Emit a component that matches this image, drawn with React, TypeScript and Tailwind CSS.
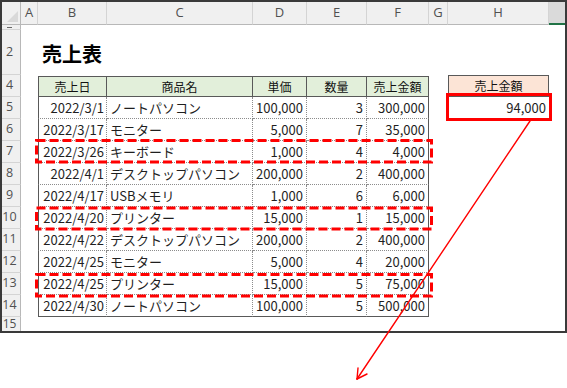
import React from "react";

const rows: string[][] = [
  ["2022/3/1", "ノートパソコン", "100,000", "3", "300,000"],
  ["2022/3/17", "モニター", "5,000", "7", "35,000"],
  ["2022/3/26", "キーボード", "1,000", "4", "4,000"],
  ["2022/4/1", "デスクトップパソコン", "200,000", "2", "400,000"],
  ["2022/4/17", "USBメモリ", "1,000", "6", "6,000"],
  ["2022/4/20", "プリンター", "15,000", "1", "15,000"],
  ["2022/4/22", "デスクトップパソコン", "200,000", "2", "400,000"],
  ["2022/4/25", "モニター", "5,000", "4", "20,000"],
  ["2022/4/25", "プリンター", "15,000", "5", "75,000"],
  ["2022/4/30", "ノートパソコン", "100,000", "5", "500,000"],
];

const colHdr =
  "bg-[#f0f0f0] [border-right:1px_solid_#d4d4d4] [border-bottom:1px_solid_#b8b8b8] flex items-center justify-center text-[13px] text-[#505050] font-['Open_Sans',sans-serif]";
const rowHdr =
  "bg-[#f0f0f0] [border-right:1px_solid_#b8b8b8] [border-bottom:1px_solid_#d4d4d4] flex items-center justify-center pr-[3px] text-[12.5px] text-[#505050] font-['Open_Sans',sans-serif] overflow-hidden";

const thBase =
  "bg-[#E2EFDA] [border-top:1px_solid_#595959] [border-bottom:1px_solid_#595959] [border-right:1px_solid_#595959] flex items-center justify-center text-[12px] text-[#111] mt-[1px]";

function App() {
  return (
    <div className="relative w-[567px] h-[388px] bg-white font-['Noto_Sans_CJK_JP',sans-serif] text-[#1f1f1f]">
      <div className="w-[567px] h-[333px] border-2 border-[#3a3a3a] overflow-hidden">
        <div className="grid grid-cols-[19px_17px_69px_146px_54px_60px_62px_19px_101px_16px] grid-rows-[23px_5px_45px_22px_repeat(10,22px)_14px]">
          {/* Column header row */}
          <div className="bg-[#f0f0f0] [border-right:1px_solid_#b8b8b8] [border-bottom:1px_solid_#b8b8b8] relative">
            <svg className="absolute right-[2px] bottom-[2px]" width="11" height="11" viewBox="0 0 11 11">
              <polygon points="11,0 11,11 0,11" fill="#d9d9d9" />
            </svg>
          </div>
          <div className={colHdr}>A</div>
          <div className={colHdr}>B</div>
          <div className={colHdr}>C</div>
          <div className={colHdr}>D</div>
          <div className={colHdr}>E</div>
          <div className={colHdr}>F</div>
          <div className={colHdr}>G</div>
          <div className={colHdr}>H</div>
          <div className="bg-[#dadada] [border-bottom:2px_solid_#217346]"></div>

          {/* Row 1 sliver */}
          <div className="bg-[#f0f0f0] [border-right:1px_solid_#b8b8b8] [border-bottom:1px_solid_#d4d4d4] flex items-end justify-center pr-[3px] pb-[1px]">
            <div className="w-[5px] h-[1px] bg-[#666]"></div>
          </div>
          <div className="col-span-9"></div>

          {/* Row 2 title */}
          <div className={rowHdr}>2</div>
          <div></div>
          <div className="flex items-center pl-[4px] pt-[2px] whitespace-nowrap overflow-visible text-[20px] font-bold text-black">
            売上表
          </div>
          <div className="col-span-7"></div>

          {/* Row 4 header */}
          <div className={rowHdr}>4</div>
          <div></div>
          <div className={thBase + " [border-left:1px_solid_#595959]"}>売上日</div>
          <div className={thBase}>商品名</div>
          <div className={thBase}>単価</div>
          <div className={thBase}>数量</div>
          <div className={thBase}>売上金額</div>
          <div></div>
          <div className="bg-[#FCE4D6] [border:1px_solid_#595959] flex items-center justify-center text-[12px] text-[#111]">
            売上金額
          </div>
          <div></div>

          {rows.map((r, i) => {
            const last = i === rows.length - 1;
            const hb = last
              ? "[border-bottom:1px_solid_#595959]"
              : "[border-bottom:1px_dotted_#8c8c8c]";
            return (
              <React.Fragment key={i}>
                <div className={rowHdr}>{i + 5}</div>
                <div></div>
                <div
                  className={
                    "[border-left:1px_solid_#595959] [border-right:1px_dotted_#8c8c8c] flex items-center justify-end pr-[2px] text-[13px] whitespace-nowrap " +
                    hb
                  }
                >
                  {r[0]}
                </div>
                <div
                  className={
                    "[border-right:1px_dotted_#8c8c8c] flex items-center pl-[3px] text-[13px] whitespace-nowrap " +
                    hb
                  }
                >
                  {r[1]}
                </div>
                <div
                  className={
                    "[border-right:1px_dotted_#8c8c8c] flex items-center justify-end pr-[3px] text-[13px] " +
                    hb
                  }
                >
                  {r[2]}
                </div>
                <div
                  className={
                    "[border-right:1px_dotted_#8c8c8c] flex items-center justify-end pr-[3px] text-[13px] " +
                    hb
                  }
                >
                  {r[3]}
                </div>
                <div
                  className={
                    "[border-right:1px_solid_#595959] flex items-center justify-end pr-[3px] text-[13px] " +
                    hb
                  }
                >
                  {r[4]}
                </div>
                <div></div>
                {i === 0 ? (
                  <div className="flex items-center justify-end pr-[3px] text-[13px]">94,000</div>
                ) : (
                  <div></div>
                )}
                <div></div>
              </React.Fragment>
            );
          })}

          {/* Row 15 (cut) */}
          <div className="bg-[#f0f0f0] [border-right:1px_solid_#b8b8b8] flex items-start justify-center pr-[3px] text-[12px] text-[#505050] font-['Open_Sans',sans-serif] leading-[14px]">
            15
          </div>
          <div className="col-span-9"></div>
        </div>
      </div>

      {/* Red annotations */}
      <svg
        className="absolute left-0 top-0 pointer-events-none"
        width="567"
        height="388"
        viewBox="0 0 567 388"
      >
        <g fill="none" stroke="#ff0000" strokeWidth="3" strokeDasharray="9 4">
          <rect x="36.5" y="140.5" width="395" height="21.5" />
          <rect x="36.5" y="208" width="395" height="21" />
          <rect x="36.5" y="274.5" width="395" height="21.5" />
        </g>
        <rect x="447.5" y="94.5" width="103" height="25" fill="none" stroke="#ff0000" strokeWidth="3" />
        <g stroke="#ff0000" strokeWidth="1.4" fill="none" strokeLinecap="round">
          <line x1="530" y1="121" x2="357" y2="379" />
          <line x1="357" y1="379" x2="367" y2="374" />
          <line x1="357" y1="379" x2="358" y2="368" />
        </g>
      </svg>
    </div>
  );
}

export default App;
